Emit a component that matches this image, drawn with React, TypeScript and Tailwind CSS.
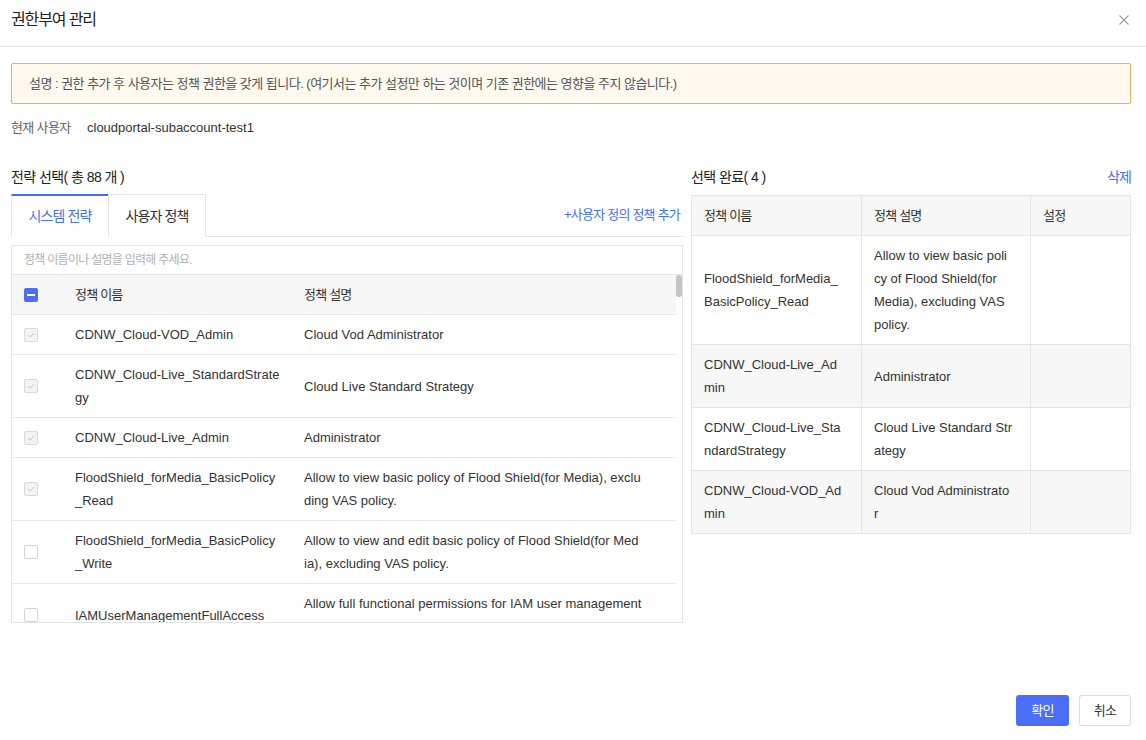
import React from "react";

type Row = { checked: boolean; name: string[]; desc: string[] };

const leftRows: Row[] = [
  { checked: true, name: ["CDNW_Cloud-VOD_Admin"], desc: ["Cloud Vod Administrator"] },
  { checked: true, name: ["CDNW_Cloud-Live_StandardStrate", "gy"], desc: ["Cloud Live Standard Strategy"] },
  { checked: true, name: ["CDNW_Cloud-Live_Admin"], desc: ["Administrator"] },
  {
    checked: true,
    name: ["FloodShield_forMedia_BasicPolicy", "_Read"],
    desc: ["Allow to view basic policy of Flood Shield(for Media), exclu", "ding VAS policy."],
  },
  {
    checked: false,
    name: ["FloodShield_forMedia_BasicPolicy", "_Write"],
    desc: ["Allow to view and edit basic policy of Flood Shield(for Med", "ia), excluding VAS policy."],
  },
  {
    checked: false,
    name: ["IAMUserManagementFullAccess"],
    desc: ["Allow full functional permissions for IAM user management", "including create, modify and delete."],
  },
];

const rightRows = [
  {
    name: ["FloodShield_forMedia_", "BasicPolicy_Read"],
    desc: ["Allow to view basic poli", "cy of Flood Shield(for", "Media), excluding VAS", "policy."],
    gray: false,
  },
  { name: ["CDNW_Cloud-Live_Ad", "min"], desc: ["Administrator"], gray: true },
  { name: ["CDNW_Cloud-Live_Sta", "ndardStrategy"], desc: ["Cloud Live Standard Str", "ategy"], gray: false },
  { name: ["CDNW_Cloud-VOD_Ad", "min"], desc: ["Cloud Vod Administrato", "r"], gray: true },
];

function Lines({ lines }: { lines: string[] }) {
  return (
    <div className="whitespace-nowrap">
      {lines.map((l, i) => (
        <div key={i}>{l}</div>
      ))}
    </div>
  );
}

function CheckBox({ checked }: { checked: boolean }) {
  if (checked) {
    return (
      <div className="w-[14px] h-[14px] rounded-[2px] border border-[#d9d9d9] bg-[#f2f3f5] flex items-center justify-center">
        <svg width="10" height="10" viewBox="0 0 10 10">
          <path d="M2.2 5.2 L4.2 7 L7.8 3.2" fill="none" stroke="#c4c6cc" strokeWidth="1" />
        </svg>
      </div>
    );
  }
  return <div className="w-[14px] h-[14px] rounded-[2px] border border-[#d4d4d4] bg-white" />;
}

export default function App() {
  return (
    <div className="w-[1146px] h-[740px] bg-white flex flex-col text-[#333] font-['Liberation_Sans','Noto_Sans_CJK_KR',sans-serif]">
      {/* header */}
      <div className="h-[47px] shrink-0 border-b border-[#e2e2e2] flex items-start justify-between pl-[11px] pr-[17px] pt-2">
        <div className="text-[16px] leading-6 text-[#222] tracking-[-0.07em]">권한부여 관리</div>
        <svg width="10" height="10" viewBox="0 0 10 10" className="mt-[7px]">
          <path d="M0.5 0.5 L9.5 9.5 M9.5 0.5 L0.5 9.5" stroke="#9a9a9a" strokeWidth="1.1" />
        </svg>
      </div>

      <div className="flex flex-col flex-1 pl-[11px] pr-[15px]">
        {/* notice */}
        <div className="mt-4 h-[41px] border border-[#f5ad55] bg-[#fff9ef] rounded-[2px] flex items-center pl-[17px] text-[13px] text-[#555] tracking-[-0.04em]">
          설명 : 권한 추가 후 사용자는 정책 권한을 갖게 됩니다. (여기서는 추가 설정만 하는 것이며 기존 권한에는 영향을 주지 않습니다.)
        </div>

        {/* current user */}
        <div className="mt-[14px] h-5 flex items-center text-[13px]">
          <div className="w-[76px] text-[#666] tracking-[-0.05em]">현재 사용자</div>
          <div className="text-[#333]">cloudportal-subaccount-test1</div>
        </div>

        {/* main */}
        <div className="mt-[29px] flex gap-2">
          {/* left */}
          <div className="w-[672px] flex flex-col">
            <div className="h-5 leading-5 text-[14px] text-[#222] tracking-[-0.04em]">전략 선택( 총 88 개 )</div>
            <div className="mt-[7px] flex h-[43px]">
              <div className="w-[97px] h-[43px] border-t-2 border-t-[#4470f4] border-l border-[#e5e5e5] flex items-center justify-center text-[14px] text-[#4470f4] tracking-[-0.06em] bg-white">
                시스템 전략
              </div>
              <div className="w-[98px] h-[43px] border-t border-l border-r border-[#e5e5e5] flex items-center justify-center text-[14px] text-[#333] tracking-[-0.06em]">
                사용자 정책
              </div>
              <div className="flex-1 border-b border-[#e5e5e5] flex items-center justify-end pr-[3px] text-[13px] text-[#4470f4] tracking-[-0.06em]">
                +사용자 정의 정책 추가
              </div>
            </div>

            <div className="mt-2 h-[378px] border border-[#e5e5e5] flex flex-col overflow-hidden">
              <div className="h-[29px] shrink-0 border-b border-[#e5e5e5] flex items-center pl-3 text-[12px] text-[#b0b0b0] tracking-[-0.06em]">
                정책 이름이나 설명을 입력해 주세요.
              </div>
              <div className="flex-1 relative overflow-hidden pr-[6px]">
                <div className="absolute right-0 top-0 w-[6px] h-[22px] rounded-[3px] bg-[#c4c4c4]" />
                <div className="h-10 bg-[#f7f7f7] border-b border-[#e8e8e8] flex items-center text-[13px] text-[#333]">
                  <div className="w-[51px] pl-3 shrink-0">
                    <div className="w-[14px] h-[14px] rounded-[2px] bg-[#4a6ef5] flex items-center justify-center">
                      <div className="w-[8px] h-[2px] bg-white" />
                    </div>
                  </div>
                  <div className="w-[229px] px-3 shrink-0 tracking-[-0.06em]">정책 이름</div>
                  <div className="flex-1 px-3 tracking-[-0.06em]">정책 설명</div>
                </div>
                {leftRows.map((r, i) => (
                  <div key={i} className="py-2 border-b border-[#e8e8e8] flex items-center text-[13px] leading-[23px] text-[#333]">
                    <div className="w-[51px] pl-3 shrink-0">
                      <CheckBox checked={r.checked} />
                    </div>
                    <div className="w-[229px] px-3 shrink-0">
                      <Lines lines={r.name} />
                    </div>
                    <div className="flex-1 px-3">
                      <Lines lines={r.desc} />
                    </div>
                  </div>
                ))}
              </div>
            </div>
          </div>

          {/* right */}
          <div className="w-[440px] flex flex-col">
            <div className="h-5 flex items-center justify-between text-[14px]">
              <div className="text-[#222] tracking-[-0.04em]">선택 완료( 4 )</div>
              <div className="text-[#4470f4] tracking-[-0.06em]">삭제</div>
            </div>
            <div className="mt-2 border border-[#e5e5e5] flex flex-col text-[13px] text-[#333]">
              <div className="h-10 bg-[#f7f7f7] border-b border-[#e5e5e5] flex">
                <div className="w-[170px] border-r border-[#e5e5e5] pl-3 flex items-center tracking-[-0.06em]">정책 이름</div>
                <div className="w-[169px] border-r border-[#e5e5e5] pl-3 flex items-center tracking-[-0.06em]">정책 설명</div>
                <div className="flex-1 pl-3 flex items-center tracking-[-0.06em]">설정</div>
              </div>
              {rightRows.map((r, i) => (
                <div
                  key={i}
                  className={`flex leading-[23px] ${i < rightRows.length - 1 ? "border-b border-[#e5e5e5]" : ""} ${r.gray ? "bg-[#f7f7f7]" : "bg-white"}`}
                >
                  <div className="w-[170px] border-r border-[#e5e5e5] pl-3 py-2 flex items-center">
                    <Lines lines={r.name} />
                  </div>
                  <div className="w-[169px] border-r border-[#e5e5e5] pl-3 py-2 flex items-center">
                    <Lines lines={r.desc} />
                  </div>
                  <div className="flex-1" />
                </div>
              ))}
            </div>
          </div>
        </div>

        {/* footer */}
        <div className="mt-auto pb-[14px] flex justify-end gap-[10px]">
          <button className="w-[53px] h-[31px] rounded-[3px] bg-[#4a6ef5] text-white text-[13px] tracking-[-0.06em]">확인</button>
          <button className="w-[52px] h-[31px] rounded-[3px] border border-[#dcdcdc] bg-white text-[#333] text-[13px] tracking-[-0.06em]">취소</button>
        </div>
      </div>
    </div>
  );
}
